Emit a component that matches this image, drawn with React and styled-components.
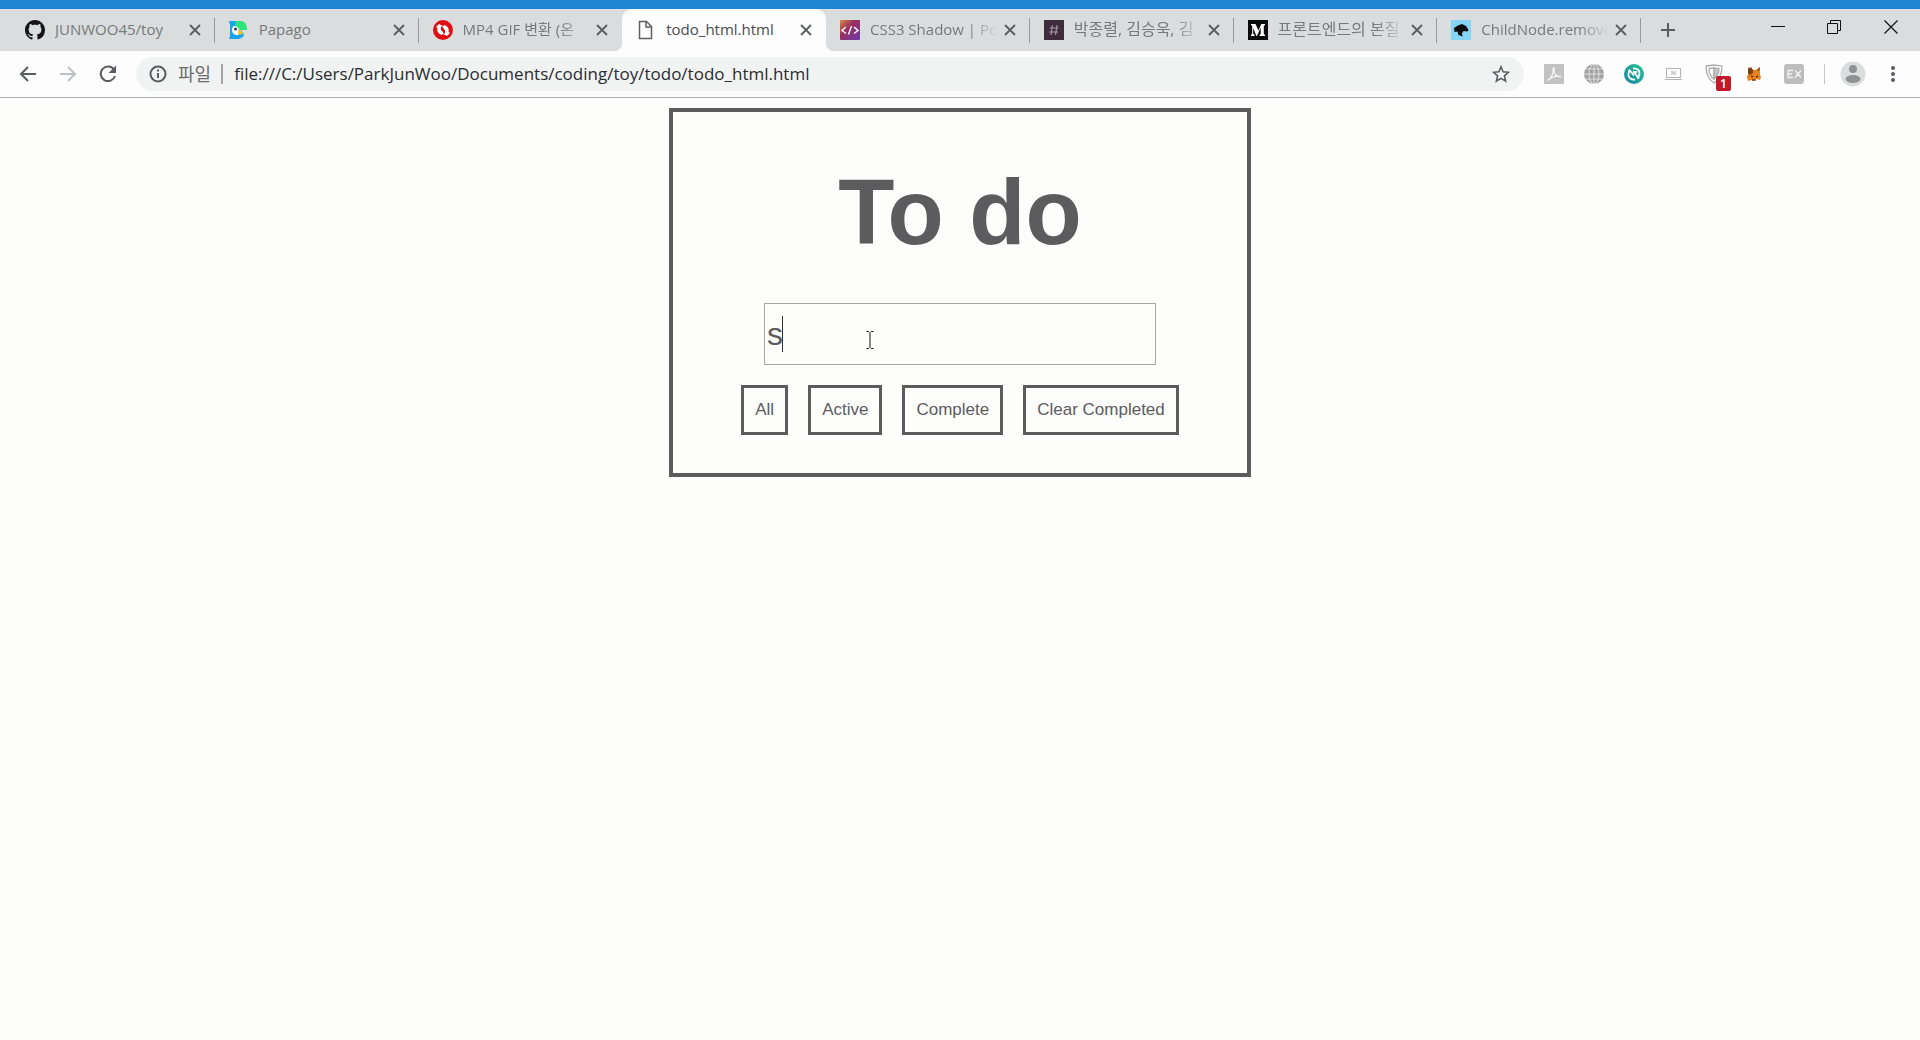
import React, { useState } from "react";
import styled, { createGlobalStyle } from "styled-components";

const uiFont = '"Open Sans", "Noto Sans CJK KR", sans-serif';
const ink = "#5c5c5e";

const GlobalStyle = createGlobalStyle`
  *, *::before, *::after { box-sizing: border-box; }
  body { margin: 0; background: #fdfdfc; font-family: ${uiFont}; }
  button, input { font: inherit; color: inherit; margin: 0; }
  button { border: 0; padding: 0; background: none; cursor: pointer; }
  svg { display: block; flex: none; }
`;

const Browser = styled.div`
  display: flex;
  flex-direction: column;
  min-height: 100vh;
`;

const TabStrip = styled.header`
  display: flex;
  align-items: stretch;
  height: 51px;
  padding-left: 11px;
  border-top: 9px solid #1e86d2;
  background: #dadddd;
`;

const TabList = styled.div`
  display: flex;
  flex: 0 1 1630px;
  min-width: 0;
`;

const Tab = styled.div`
  position: relative;
  display: flex;
  flex: 1 1 0;
  min-width: 0;
  align-items: center;
  padding: 0 10px 0 14px;
  border-radius: ${(p) => (p.$active ? "10px 10px 0 0" : "0")};
  background: ${(p) => (p.$active ? "#fdfdfd" : "transparent")};
  color: ${(p) => (p.$active ? "#4b4c4e" : "#77797b")};

  &::before,
  &::after {
    content: "";
    display: ${(p) => (p.$active ? "block" : "none")};
    position: absolute;
    bottom: 0;
    width: 8px;
    height: 8px;
  }
  &::before {
    right: 100%;
    background: radial-gradient(circle at 0 0, transparent 8px, #fdfdfd 8px);
  }
  &::after {
    left: 100%;
    background: radial-gradient(circle at 100% 0, transparent 8px, #fdfdfd 8px);
  }
`;

const TabDivider = styled.span`
  position: absolute;
  right: 0;
  width: 1px;
  height: 25px;
  align-self: center;
  background: #96999e;
`;

const TabSelect = styled.button`
  display: flex;
  flex: 1;
  min-width: 0;
  align-items: center;
  gap: 10px;
  height: 100%;
  text-align: left;
`;

const TabTitle = styled.span`
  flex: 1;
  min-width: 0;
  padding-bottom: 2px;
  overflow: hidden;
  white-space: nowrap;
  font-size: ${(p) => (p.$hangul ? 16 : 15)}px;
  line-height: 24px;
  mask-image: ${(p) =>
    p.$fade ? "linear-gradient(to left, transparent 2px, #000 32px)" : "none"};
`;

const IconButton = styled.button`
  display: flex;
  flex: none;
  align-items: center;
  justify-content: center;
  width: ${(p) => p.$width || 20}px;
  height: ${(p) => p.$height || 20}px;
  color: ${(p) => p.$color || "#5a5c5f"};
`;

const NewTab = styled(IconButton)`
  align-self: center;
  margin-left: 13px;
`;

const WindowControls = styled.div`
  display: flex;
  margin-left: auto;
`;

const Toolbar = styled.nav`
  display: flex;
  align-items: center;
  height: 47px;
  padding: 0 7px 0 8px;
  border-bottom: 1px solid #b0b1b3;
  background: #fdfdfd;
`;

const AddressBar = styled.div`
  display: flex;
  flex: 1;
  min-width: 0;
  align-items: center;
  height: 34px;
  margin: 0 10px 0 8px;
  padding: 0 13px;
  border-radius: 17px;
  background: #f1f3f2;
`;

const Scheme = styled.label`
  padding: 0 10px 0 11px;
  color: #6b6d70;
  font-size: 18px;
  line-height: 24px;
`;

const AddressDivider = styled.span`
  width: 2px;
  height: 20px;
  background: #a3a5a8;
`;

const Address = styled.input`
  flex: 1;
  min-width: 0;
  padding: 0 11px;
  border: 0;
  outline: 0;
  background: none;
  color: #2b2c2f;
  font-size: 17px;
  line-height: 24px;
`;

const Extensions = styled.div`
  display: flex;
  align-items: center;
`;

const ExtensionButton = styled(IconButton)`
  position: relative;
  width: 40px;
  height: 32px;
`;

const Badge = styled.span`
  position: absolute;
  right: 3px;
  bottom: -1px;
  width: 15px;
  height: 15px;
  border-radius: 2px;
  background: #c01a2b;
  color: #fff;
  font-size: 12px;
  font-weight: 600;
  line-height: 15px;
  text-align: center;
`;

const ToolbarDivider = styled.span`
  width: 1px;
  height: 20px;
  margin: 0 8px 0 10px;
  background: #c3c5c8;
`;

const Page = styled.main`
  flex: 1;
  padding: 10px 8px;
`;

const Card = styled.section`
  display: flex;
  flex-direction: column;
  align-items: center;
  width: 100%;
  max-width: 582px;
  margin: 0 auto;
  padding: 40px 20px 38px;
  border: 4px solid ${ink};
`;

const Title = styled.h1`
  margin: 0 0 31px;
  color: ${ink};
  font-family: "Liberation Sans", Arial, sans-serif;
  font-size: 92px;
  font-weight: 700;
  line-height: 120px;
`;

const EntryField = styled.div`
  position: relative;
  width: 100%;
  max-width: 392px;
`;

const Entry = styled.input`
  display: block;
  width: 100%;
  height: 62px;
  padding: 1px 2px;
  border: 1px solid #a6a6a8;
  border-radius: 0;
  outline: 0;
  background: transparent;
  color: ${ink};
  font-family: "Liberation Sans", Arial, sans-serif;
  font-size: 32px;
`;

const Caret = styled.span`
  position: absolute;
  top: 13px;
  left: 18px;
  width: 1px;
  height: 36px;
  background: #333;
`;

const Pointer = styled.svg`
  position: absolute;
  top: 28px;
  left: 102px;
`;

const Filters = styled.div`
  display: flex;
  justify-content: center;
  gap: 20px;
  margin-top: 20px;
`;

const FilterButton = styled.button`
  height: 50px;
  padding: 0 11px;
  border: 3px solid ${ink};
  color: ${ink};
  font-family: "Liberation Sans", Arial, sans-serif;
  font-size: 17px;
  white-space: nowrap;
`;

const GithubIcon = () => (
  <svg width="20" height="20" viewBox="0 0 16 16" fill="#141416">
    <path d="M8 0C3.58 0 0 3.58 0 8c0 3.54 2.29 6.53 5.47 7.59.4.07.55-.17.55-.38 0-.19-.01-.82-.01-1.49-2.01.37-2.53-.49-2.69-.94-.09-.23-.48-.94-.82-1.13-.28-.15-.68-.52-.01-.53.63-.01 1.08.58 1.23.82.72 1.21 1.87.87 2.33.66.07-.52.28-.87.51-1.07-1.78-.2-3.64-.89-3.64-3.95 0-.87.31-1.59.82-2.15-.08-.2-.36-1.02.08-2.12 0 0 .67-.21 2.2.82.64-.18 1.32-.27 2-.27s1.36.09 2 .27c1.53-1.04 2.2-.82 2.2-.82.44 1.1.16 1.92.08 2.12.51.56.82 1.27.82 2.15 0 3.07-1.87 3.75-3.65 3.95.29.25.54.73.54 1.48 0 1.07-.01 1.93-.01 2.2 0 .21.15.46.55.38A8.01 8.01 0 0 0 16 8c0-4.42-3.58-8-8-8z" />
  </svg>
);

const PapagoIcon = () => (
  <svg width="20" height="20" viewBox="0 0 20 20">
    <path d="M0 1h9l3 9 3 4-1 3-4 2H0l1-3V5z" fill="#17a5ee" />
    <path d="M7 1h5c4 0 6 4 6 9h-6c-3-1-5-3-6-5z" fill="#2be57c" />
    <path d="M5 6c3 0 5 2 6 5l-2 4c-4 0-6-2-6-5 0-2 1-4 2-4z" fill="#fff" />
    <path d="M9 10c2-1 4 1 5 4l-5 1z" fill="#f9c623" />
    <circle cx="6.500" cy="9" r="1.500" fill="#243b55" />
  </svg>
);

const ConvertIcon = () => (
  <svg width="20" height="20" viewBox="0 0 20 20">
    <circle cx="10" cy="10" r="10" fill="#df0d14" />
    <path d="M3 7l3-3 5 2.500-3 .5c-.5 2.500.5 4 2.500 5.500L9 15C5.500 14 3.500 11.500 4.500 8z" fill="#fff" />
    <path d="M17 13l-3 3-5-2.500 3-.5c.5-2.500-.5-4-2.500-5.500L11 5c3.500 1 5.500 3.500 4.500 7z" fill="#fff" />
    <path d="M8.500 6.500l3 7" stroke="#df0d14" strokeWidth="1.200" />
  </svg>
);

const FileIcon = () => (
  <svg width="20" height="20" viewBox="0 0 20 20" fill="none" stroke="#5f6164" strokeWidth="1.500">
    <path d="M3.500 1.500h7l5 5v12h-12z" />
    <path d="M10 2v5h5" />
  </svg>
);

const CodeIcon = () => (
  <svg width="20" height="20" viewBox="0 0 20 20">
    <defs>
      <linearGradient id="code" x1="0" y1="0" x2="1" y2="1">
        <stop offset="0" stopColor="#d58a45" />
        <stop offset="0.400" stopColor="#9a2d5e" />
        <stop offset="1" stopColor="#6a3cae" />
      </linearGradient>
    </defs>
    <rect width="20" height="20" rx="1" fill="url(#code)" />
    <path d="M6 7l-4 3.500 4 3M14 7l4 3.500-4 3M11.500 6l-3 8.500" fill="none" stroke="#fff" strokeWidth="1.400" />
  </svg>
);

const HashIcon = () => (
  <svg width="20" height="20" viewBox="0 0 20 20">
    <rect width="20" height="20" fill="#3e2c3d" />
    <path d="M8.500 5L7 15M13 5l-1.500 10M5.500 8h9M5 12h9" stroke="#a396a4" strokeWidth="1.200" />
  </svg>
);

const MediumIcon = () => (
  <svg width="20" height="20" viewBox="0 0 20 20">
    <rect width="20" height="20" fill="#0b0b0b" />
    <path d="M3 4h4.500l3 6.500L13.300 4H17v1l-1.200 1v8l1.200 1v1h-5.500v-1l1.200-1V7.500L9 16h-.6L5.200 8v5.500L6.600 15v1H3v-1l1.200-1.500V6L3 5z" fill="#fff" />
  </svg>
);

const MdnIcon = () => (
  <svg width="20" height="20" viewBox="0 0 20 20">
    <rect width="20" height="20" fill="#84d6f4" />
    <path d="M3 8l4-2.500L11 4l4 2 2.500 4-1 1.500-4-.5-1.500 2.500.5 3-4-1.500-1-3.500-3 .5z" fill="#0a0a0c" />
  </svg>
);

const CloseIcon = () => (
  <svg width="12" height="12" viewBox="0 0 12 12" stroke="currentColor" strokeWidth="1.800">
    <path d="M1 1l10 10M11 1l-10 10" />
  </svg>
);

const tabs = [
  { title: "JUNWOO45/toy", Icon: GithubIcon },
  { title: "Papago", Icon: PapagoIcon },
  { title: "MP4 GIF 변환 (온", Icon: ConvertIcon, fade: true },
  { title: "todo_html.html", Icon: FileIcon },
  { title: "CSS3 Shadow | Po", Icon: CodeIcon, fade: true },
  { title: "박종렬, 김승욱, 김", Icon: HashIcon, fade: true, hangul: true },
  { title: "프론트엔드의 본질", Icon: MediumIcon, fade: true, hangul: true },
  { title: "ChildNode.remove", Icon: MdnIcon, fade: true },
];

const extensions = [
  {
    name: "Acrobat",
    icon: (
      <svg width="20" height="20" viewBox="0 0 20 20">
        <rect width="20" height="20" fill="#c2c2c2" />
        <path d="M3.500 16.500c4-2 6-7 5.500-11 0-3 2-2 1 1 .5 4 3 7 7 6-4-1-9 0-13.500 4z" fill="none" stroke="#f5f5f5" strokeWidth="1.200" />
      </svg>
    ),
  },
  {
    name: "Web",
    icon: (
      <svg width="20" height="20" viewBox="0 0 20 20">
        <circle cx="10" cy="10" r="10" fill="#a2a2a2" />
        <g fill="none" stroke="#e2e2e2">
          <path d="M0 10h20M10 0v20M2 5h16M2 15h16" />
          <ellipse cx="10" cy="10" rx="5" ry="10" />
        </g>
      </svg>
    ),
  },
  {
    name: "Sync",
    icon: (
      <svg width="20" height="20" viewBox="0 0 20 20" fill="none">
        <defs>
          <linearGradient id="sync" x1="1" y1="0" x2="0" y2="1">
            <stop offset="0" stopColor="#25c893" />
            <stop offset="1" stopColor="#197fa3" />
          </linearGradient>
        </defs>
        <circle cx="10" cy="10" r="10" fill="url(#sync)" />
        <path d="M9 4.500c4-.5 7 2 6.500 5.500-.2 2-1 3.500-2.500 4.500M11 15.500c-4 .5-7-2-6.500-5.500.2-2 .5-3 1.500-4" stroke="#fff" strokeWidth="1.800" />
        <path d="M5 5.500l5 6M10 8l5 6.500M9 8h4" stroke="#fff" strokeWidth="1.800" />
      </svg>
    ),
  },
  {
    name: "Capture",
    icon: (
      <svg width="18" height="14" viewBox="0 0 18 14" fill="none" stroke="#b3b3b3">
        <rect x="1.500" y="1.500" width="14" height="9" />
        <path d="M0 12.500h17M7 8V4l3 4V4" />
      </svg>
    ),
  },
  {
    name: "Shield",
    badge: "1",
    icon: (
      <svg width="18" height="20" viewBox="0 0 18 20" fill="none" stroke="#adadad" strokeWidth="1.300">
        <path d="M1 2l8-1 8 1c0 8-2 13-8 17C3 15 1 10 1 2z" />
        <path d="M4 4.500L9 4v11c-3-2-5-6-5-10.500z" />
        <path d="M9 4l5 .5c0 4-2 8-5 10.500z" fill="#c4c4c4" />
      </svg>
    ),
  },
  {
    name: "MetaMask",
    icon: (
      <svg width="14" height="16" viewBox="0 0 14 16">
        <path d="M1 1l4 3h4l4-3v8l1 2-1 3-4-1-2 2-3-1-3 1-1-4 1-3z" fill="#e8821e" />
        <path d="M1 3l3-2 2 3v3l-3 2-2-2zM13 1l-3 3 2 1z" fill="#7a3f17" />
        <path d="M4 10l2 1M9 11l2-1M5 14h4" stroke="#402413" strokeWidth="1.200" />
      </svg>
    ),
  },
  {
    name: "EX",
    icon: (
      <svg width="20" height="20" viewBox="0 0 20 20" fill="none">
        <rect width="20" height="20" rx="3" fill="#bdbdbd" />
        <path d="M9 6.500H4v7h5M4 10h4M11 6.500l6 7M17 6.500l-6 7" stroke="#f3f3f3" strokeWidth="1.300" />
      </svg>
    ),
  },
];

const filters = ["All", "Active", "Complete", "Clear Completed"];

function BrowserTab({ title, Icon, fade, hangul, active, divider, onSelect }) {
  return (
    <Tab $active={active}>
      <TabSelect type="button" onClick={onSelect}>
        <Icon />
        <TabTitle $fade={fade} $hangul={hangul}>
          {title}
        </TabTitle>
      </TabSelect>
      <IconButton type="button" aria-label={`Close ${title}`}>
        <CloseIcon />
      </IconButton>
      {divider && <TabDivider />}
    </Tab>
  );
}

export default function App() {
  const [activeTab, setActiveTab] = useState(3);
  const [url, setUrl] = useState(
    "file:///C:/Users/ParkJunWoo/Documents/coding/toy/todo/todo_html.html"
  );
  const [entry, setEntry] = useState("s");

  return (
    <Browser>
      <GlobalStyle />
      <TabStrip>
        <TabList>
          {tabs.map((tab, i) => (
            <BrowserTab
              key={tab.title}
              {...tab}
              active={i === activeTab}
              divider={i !== activeTab && i + 1 !== activeTab}
              onSelect={() => setActiveTab(i)}
            />
          ))}
        </TabList>
        <NewTab type="button" aria-label="New tab" $width={28}>
          <svg width="16" height="16" viewBox="0 0 16 16" stroke="currentColor" strokeWidth="2">
            <path d="M8 1v14M1 8h14" />
          </svg>
        </NewTab>
        <WindowControls>
          <IconButton type="button" aria-label="Minimize" $width={56} $height={36} $color="#111">
            <svg width="14" height="14" viewBox="0 0 14 14" stroke="currentColor">
              <path d="M0 6.500h14" />
            </svg>
          </IconButton>
          <IconButton type="button" aria-label="Restore" $width={56} $height={36} $color="#111">
            <svg width="14" height="14" viewBox="0 0 14 14" fill="none" stroke="currentColor">
              <path d="M0.500 3.500h10v10h-10zM3.500 3V0.500h10v10H11" />
            </svg>
          </IconButton>
          <IconButton type="button" aria-label="Close" $width={58} $height={36} $color="#111">
            <svg width="14" height="14" viewBox="0 0 14 14" stroke="currentColor" strokeWidth="1.200">
              <path d="M0.500 0.500l13 13M13.500 0.500l-13 13" />
            </svg>
          </IconButton>
        </WindowControls>
      </TabStrip>

      <Toolbar>
        <IconButton type="button" aria-label="Back" $width={40} $height={36}>
          <svg width="18" height="16" viewBox="0 0 18 16" fill="none" stroke="currentColor" strokeWidth="2">
            <path d="M17 8H2M9 1L2 8l7 7" />
          </svg>
        </IconButton>
        <IconButton type="button" aria-label="Forward" $width={40} $height={36} $color="#bfc0c3">
          <svg width="18" height="16" viewBox="0 0 18 16" fill="none" stroke="currentColor" strokeWidth="2">
            <path d="M1 8h15M9 1l7 7-7 7" />
          </svg>
        </IconButton>
        <IconButton type="button" aria-label="Reload" $width={40} $height={36}>
          <svg width="18" height="18" viewBox="0 0 18 18" fill="none">
            <path d="M15 4.500A7.300 7.300 0 1 0 16 11" stroke="currentColor" strokeWidth="2" />
            <path d="M17 0.500v7.500h-7.500z" fill="currentColor" />
          </svg>
        </IconButton>
        <AddressBar>
          <svg width="18" height="18" viewBox="0 0 18 18" fill="none" stroke="#5a5c5f" strokeWidth="2">
            <circle cx="9" cy="9" r="7.500" />
            <path d="M9 8v5M9 4.500v2" />
          </svg>
          <Scheme htmlFor="address">파일</Scheme>
          <AddressDivider />
          <Address id="address" value={url} onChange={(e) => setUrl(e.target.value)} />
          <IconButton type="button" aria-label="Bookmark">
            <svg width="18" height="18" viewBox="0 0 18 18" fill="none" stroke="currentColor" strokeWidth="1.600">
              <path d="M9 1.800l2.100 5 5.400.5-4.100 3.600 1.200 5.300L9 13.400l-4.600 2.800 1.200-5.300-4.100-3.600 5.400-.5z" />
            </svg>
          </IconButton>
        </AddressBar>
        <Extensions>
          {extensions.map(({ name, icon, badge }) => (
            <ExtensionButton key={name} type="button" aria-label={name}>
              {icon}
              {badge && <Badge>{badge}</Badge>}
            </ExtensionButton>
          ))}
          <ToolbarDivider />
          <ExtensionButton type="button" aria-label="Profile">
            <svg width="26" height="26" viewBox="0 0 26 26">
              <circle cx="13" cy="13" r="12.500" fill="#dcdddd" />
              <circle cx="13" cy="8" r="4" fill="#909193" />
              <ellipse cx="13" cy="18" rx="7.500" ry="4" fill="#909193" />
            </svg>
          </ExtensionButton>
          <ExtensionButton type="button" aria-label="Menu">
            <svg width="4" height="16" viewBox="0 0 4 16" fill="currentColor">
              <circle cx="2" cy="2" r="2" />
              <circle cx="2" cy="8" r="2" />
              <circle cx="2" cy="14" r="2" />
            </svg>
          </ExtensionButton>
        </Extensions>
      </Toolbar>

      <Page>
        <Card>
          <Title>To do</Title>
          <EntryField>
            <Entry
              aria-label="To do"
              value={entry}
              onChange={(e) => setEntry(e.target.value)}
            />
            <Caret />
            <Pointer width="8" height="18" viewBox="0 0 8 18" fill="none" stroke="#111">
              <path d="M0.500 0.500h2.500M5 0.500h2.500M0.500 17.500h2.500M5 17.500h2.500M4 1v16" />
            </Pointer>
          </EntryField>
          <Filters>
            {filters.map((name) => (
              <FilterButton key={name} type="button">
                {name}
              </FilterButton>
            ))}
          </Filters>
        </Card>
      </Page>
    </Browser>
  );
}
